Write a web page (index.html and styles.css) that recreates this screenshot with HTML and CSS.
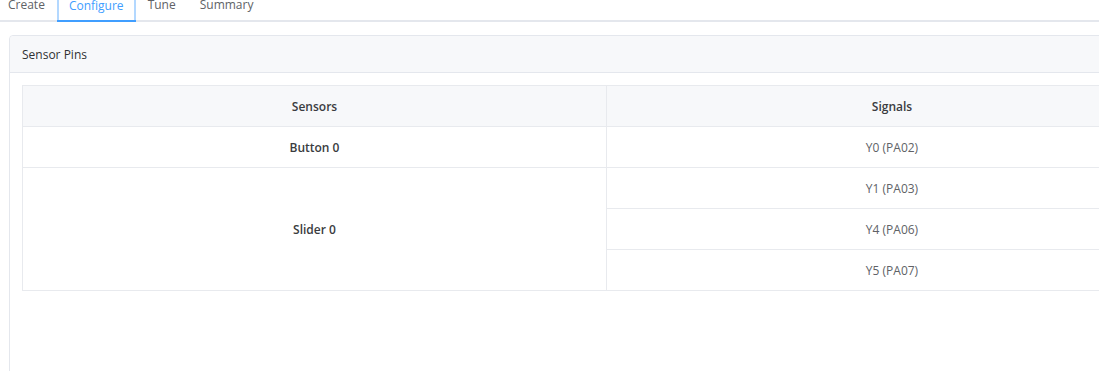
FILE: index.html
```html
<!DOCTYPE html>
<html lang="en">
<head>
    <meta charset="UTF-8">
    <meta name="viewport" content="width=device-width, initial-scale=1.0">
    <title>Configure - Sensor Pins</title>
    <link rel="stylesheet" href="styles.css">
</head>
<body>

    <!-- Step tabs -->
    <div class="tabs">
        <div class="tab">Create</div>
        <div class="tab active">Configure</div>
        <div class="tab">Tune</div>
        <div class="tab">Summary</div>
    </div>

    <!-- Sensor pins card -->
    <div class="card">
        <div class="card-header">Sensor Pins</div>
        <div class="card-body">
            <table class="pins">
                <thead>
                    <tr>
                        <th class="col-sensor">Sensors</th>
                        <th>Signals</th>
                    </tr>
                </thead>
                <tbody>
                    <tr>
                        <td class="sensor">Button 0</td>
                        <td>Y0 (PA02)</td>
                    </tr>
                    <tr>
                        <td class="sensor" rowspan="3">Slider 0</td>
                        <td>Y1 (PA03)</td>
                    </tr>
                    <tr>
                        <td>Y4 (PA06)</td>
                    </tr>
                    <tr>
                        <td>Y5 (PA07)</td>
                    </tr>
                </tbody>
            </table>
        </div>
    </div>

</body>
</html>
```

FILE: styles.css
```css
body {
    font-family: 'Open Sans', 'Noto Sans', sans-serif;
    background-color: #fff;
    color: #606266;
    margin: 0;
    padding: 0;
    width: 1240px;
    overflow: hidden;
}

/* Tabs */
.tabs {
    display: flex;
    margin-top: -19px;
    padding-left: 8px;
    border-bottom: 2px solid #e4e7ed;
}

.tab {
    height: 39px;
    line-height: 47px;
    padding: 0 12px;
    font-size: 12px;
    color: #606266;
    box-sizing: border-box;
}

.tab:first-child {
    padding-left: 0;
}

.tab.active {
    color: #409eff;
    border: 2px solid #b3d8ff;
    border-bottom: none;
    padding: 0 10px;
    line-height: 45px;
    position: relative;
}

.tab.active::after {
    content: "";
    position: absolute;
    left: -2px;
    right: -2px;
    bottom: -2px;
    height: 2px;
    background-color: #409eff;
}

/* Card */
.card {
    margin: 13px 0 0 9px;
    width: 1182px;
    height: 400px;
    border: 1px solid #e4e7ed;
    border-radius: 4px;
    box-sizing: border-box;
}

.card-header {
    height: 36px;
    line-height: 37px;
    padding: 0 12px;
    font-size: 12px;
    color: #303133;
    background-color: #f7f8fa;
    border-bottom: 1px solid #e4e7ed;
    border-radius: 4px 4px 0 0;
}

.card-body {
    padding: 12px;
}

/* Pins table */
.pins {
    width: 1156px;
    border-collapse: collapse;
    font-size: 12px;
}

.pins th,
.pins td {
    height: 40px;
    padding: 0;
    text-align: center;
    border: 1px solid #e8eaee;
}

.pins th {
    font-weight: 600;
    color: #3a3c40;
    background-color: #f7f8fa;
}

.pins .col-sensor {
    width: 583px;
}

.pins td {
    color: #606266;
}

.pins td.sensor {
    font-weight: 600;
    color: #3a3c40;
}
```
